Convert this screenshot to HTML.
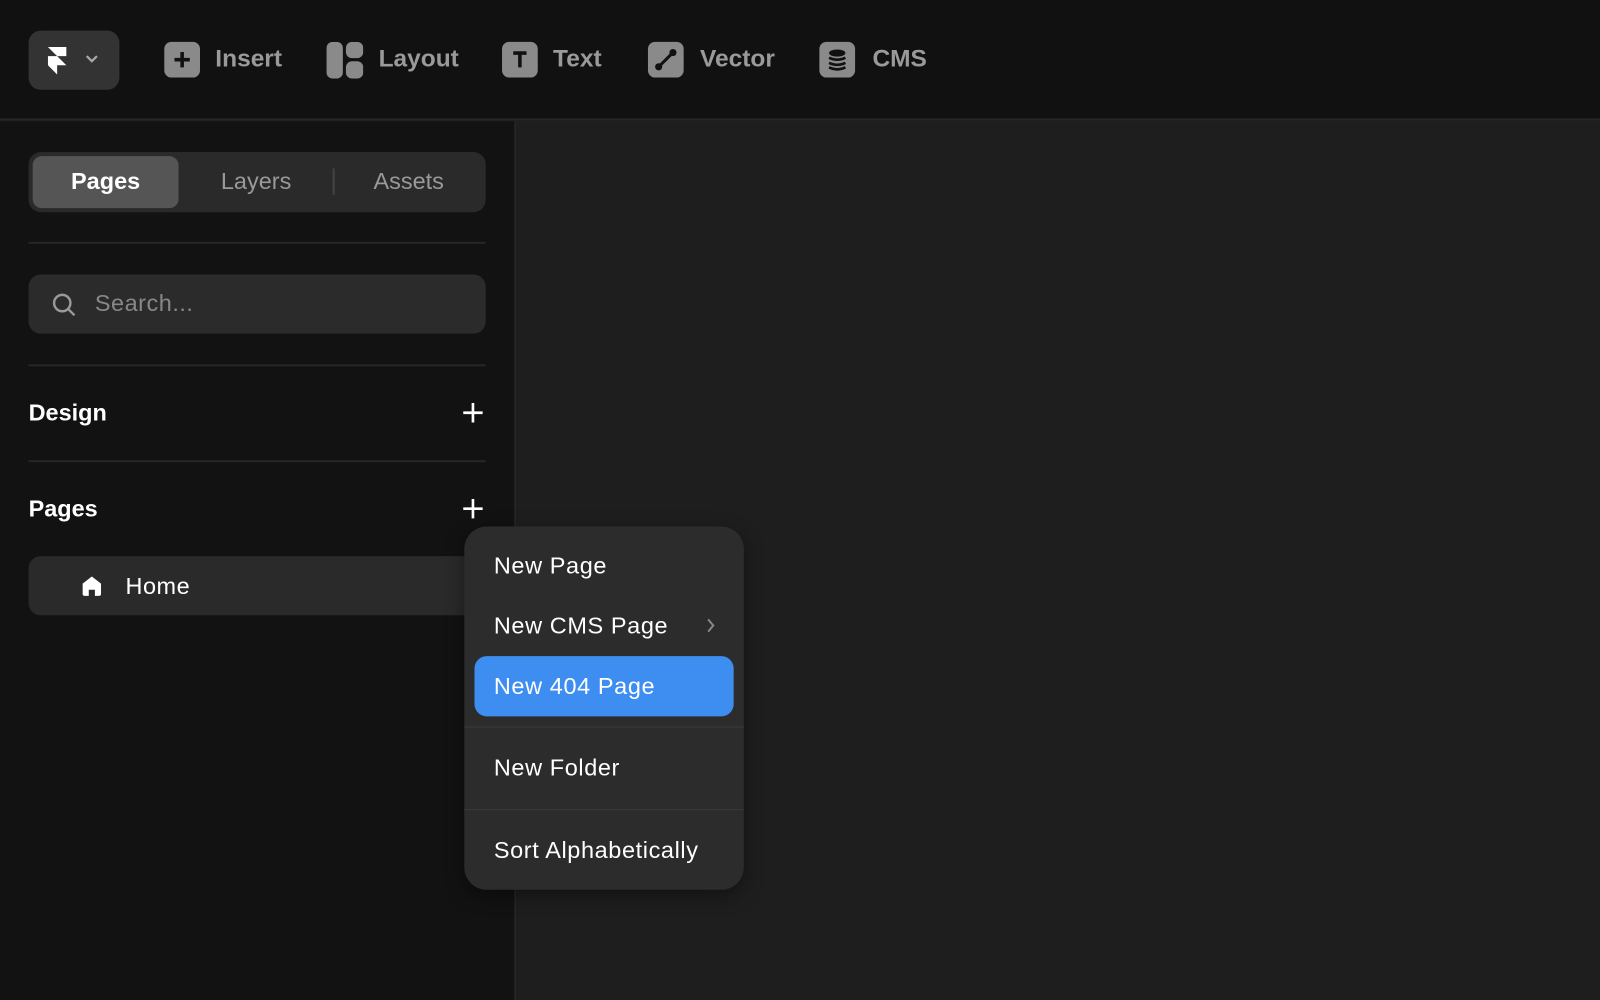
<!DOCTYPE html>
<html><head><style>
*{margin:0;padding:0;box-sizing:border-box}
html,body{width:1600px;height:1000px;overflow:hidden;background:#1e1e1e;font-family:"Liberation Sans",sans-serif}
#w{position:absolute;left:0;top:0;width:1568px;height:980px;transform:scale(1.0204);transform-origin:0 0}
.a{position:absolute}
.top{left:0;top:0;width:1568px;height:118px;background:#111;border-bottom:2px solid #262626}
.side{left:0;top:119px;width:506px;height:861px;background:#121212;border-right:2px solid #262626}
.ti{position:absolute;top:41px;width:35px;height:35px;background:#8a8a8a;border-radius:7px}
.tt{position:absolute;top:44px;font-size:24px;color:#9a9a9a;font-weight:bold;line-height:28px}
.hl{height:2px;background:#262626;left:28px;width:448px}
.mi{position:absolute;left:29px;font-size:23px;color:#fff;line-height:28px;letter-spacing:0.6px}
</style></head><body><div id="w">
<div class="a top">
 <div class="a" style="left:28px;top:30px;width:89px;height:58px;background:#333;border-radius:12px">
  <svg class="a" style="left:17px;top:14px" width="24" height="32" viewBox="0 0 24 32"><path d="M2 2h18v9H11zM2 11h9l9 9H11v9L2 20z" fill="#fff"/></svg>
  <svg class="a" style="left:55px;top:23px" width="14" height="10" viewBox="0 0 14 10"><path d="M2 2l5 5 5-5" stroke="#aaa" stroke-width="2.2" fill="none"/></svg>
 </div>
 <div class="ti" style="left:161px"><svg width="35" height="35"><path d="M17.5 10v15M10 17.5h15" stroke="#111" stroke-width="3.5"/></svg></div>
 <div class="tt" style="left:211px">Insert</div>
 <div class="ti" style="left:320px;background:none"><svg width="36" height="36"><rect x="0" y="0" width="16" height="36" rx="6" fill="#8a8a8a"/><rect x="19" y="0" width="17" height="16" rx="6" fill="#8a8a8a"/><rect x="19" y="19" width="17" height="17" rx="6" fill="#8a8a8a"/></svg></div>
 <div class="tt" style="left:371px">Layout</div>
 <div class="ti" style="left:492px"><svg width="35" height="35"><path d="M11 11h13M17.5 11v14" stroke="#111" stroke-width="3.5"/></svg></div>
 <div class="tt" style="left:542px">Text</div>
 <div class="ti" style="left:635px"><svg width="35" height="35"><path d="M11 24L24 11" stroke="#111" stroke-width="3"/><circle cx="10.5" cy="24.5" r="3.5" fill="#111"/><circle cx="24.5" cy="10.5" r="3.5" fill="#111"/></svg></div>
 <div class="tt" style="left:686px">Vector</div>
 <div class="ti" style="left:803px"><svg width="35" height="35"><ellipse cx="17.5" cy="11" rx="8" ry="3.5" fill="#111"/><path d="M9.5 15.5q8 4 16 0M9.5 20.5q8 4 16 0M9.5 25q8 4 16 0" stroke="#111" stroke-width="2.6" fill="none"/></svg></div>
 <div class="tt" style="left:855px">CMS</div>
</div>
<div class="a side"></div>
<div class="a" style="left:28px;top:149px;width:448px;height:59px;background:#2a2a2a;border-radius:12px">
 <div class="a" style="left:4px;top:4px;width:143px;height:51px;background:#555;border-radius:9px"></div>
 <div class="a" style="left:4px;width:143px;top:15px;text-align:center;color:#fff;font-size:23px;font-weight:bold">Pages</div>
 <div class="a" style="left:150px;width:146px;top:15px;text-align:center;color:#999;font-size:23px">Layers</div>
 <div class="a" style="left:298px;top:16px;width:2px;height:26px;background:#444"></div>
 <div class="a" style="left:300px;width:145px;top:15px;text-align:center;color:#999;font-size:23px">Assets</div>
</div>
<div class="a hl" style="top:237px"></div>
<div class="a" style="left:28px;top:269px;width:448px;height:58px;background:#2b2b2b;border-radius:12px">
 <svg class="a" style="left:22px;top:17px" width="26" height="26"><circle cx="11" cy="11" r="8" stroke="#999" stroke-width="2.4" fill="none"/><path d="M17 17l6 6" stroke="#999" stroke-width="2.4"/></svg>
 <div class="a" style="left:65px;top:15px;color:#888;font-size:23px;letter-spacing:0.5px">Search...</div>
</div>
<div class="a hl" style="top:357px"></div>
<div class="a" style="left:28px;top:391px;color:#fff;font-size:23px;font-weight:bold">Design</div>
<svg class="a" style="left:453px;top:394px" width="21" height="21"><path d="M10.5 1v19M1 10.5h19" stroke="#fff" stroke-width="2.6"/></svg>
<div class="a hl" style="top:451px"></div>
<div class="a" style="left:28px;top:485px;color:#fff;font-size:23px;font-weight:bold">Pages</div>
<svg class="a" style="left:453px;top:488px" width="21" height="21"><path d="M10.5 1v19M1 10.5h19" stroke="#fff" stroke-width="2.6"/></svg>
<div class="a" style="left:28px;top:545px;width:445px;height:58px;background:#2a2a2a;border-radius:12px">
 <svg class="a" style="left:51px;top:18px" width="22" height="22" viewBox="0 0 22 22"><path d="M2 9L11 2l9 7v10a2 2 0 0 1-2 2h-4v-6h-6v6H4a2 2 0 0 1-2-2z" fill="#fff"/></svg>
 <div class="a" style="left:95px;top:16px;color:#fff;font-size:23px;letter-spacing:0.5px">Home</div>
</div>
<div class="a" style="left:455px;top:516px;width:274px;height:356px;background:#2c2c2c;border-radius:22px;box-shadow:0 6px 20px rgba(0,0,0,.4)">
 <div class="mi" style="top:24px">New Page</div>
 <div class="mi" style="top:83px">New CMS Page</div>
 <svg class="a" style="left:236px;top:89px" width="12" height="16"><path d="M3 2l5 6-5 6" stroke="#888" stroke-width="2" fill="none"/></svg>
 <div class="a" style="left:10px;top:127px;width:254px;height:59px;background:#3d8ef0;border-radius:12px"></div>
 <div class="mi" style="top:142px">New 404 Page</div>
 <div class="a" style="left:0;top:196px;width:274px;height:1px;background:#3a3a3a"></div>
 <div class="mi" style="top:222px">New Folder</div>
 <div class="a" style="left:0;top:277px;width:274px;height:1px;background:#3a3a3a"></div>
 <div class="mi" style="top:303px">Sort Alphabetically</div>
</div>
</div></body></html>
